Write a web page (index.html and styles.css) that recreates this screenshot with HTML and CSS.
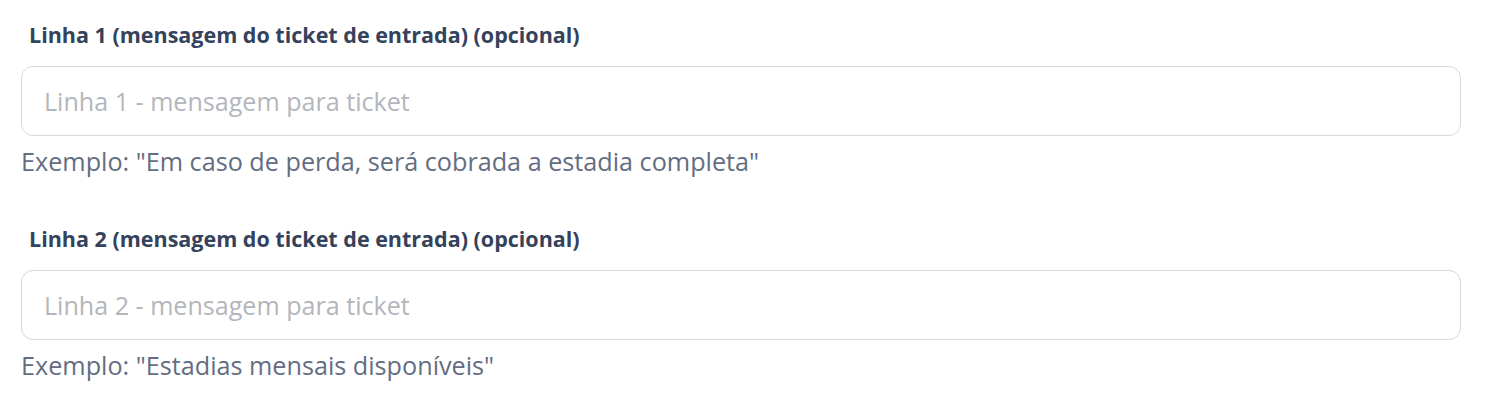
FILE: index.html
```html
<!DOCTYPE html>
<html lang="pt">
<head>
<meta charset="utf-8">
<link rel="stylesheet" href="styles.css">
</head>
<body>
<div class="form">
  <div class="field">
    <label class="label">Linha 1 (mensagem do ticket de entrada) (opcional)</label>
    <input class="input" type="text" placeholder="Linha 1 - mensagem para ticket">
    <p class="help">Exemplo: "Em caso de perda, será cobrada a estadia completa"</p>
  </div>
  <div class="field">
    <label class="label">Linha 2 (mensagem do ticket de entrada) (opcional)</label>
    <input class="input" type="text" placeholder="Linha 2 - mensagem para ticket">
    <p class="help">Exemplo: "Estadias mensais disponíveis"</p>
  </div>
</div>
</body>
</html>
```
FILE: styles.css
```css
html, body {
  margin: 0;
  padding: 0;
  background: #ffffff;
}
body {
  font-family: "Open Sans", "Noto Sans", sans-serif;
}
.form {
  display: flex;
  flex-direction: column;
  gap: 46px;
  padding: 20px 33px 0 21px;
}
.field {
  display: flex;
  flex-direction: column;
}
.label {
  font-size: 21.5px;
  font-weight: 700;
  color: #34425c;
  line-height: 30px;
  padding-left: 8px;
  margin-bottom: 16px;
}
.input {
  box-sizing: border-box;
  height: 70px;
  width: 100%;
  border: 1px solid #d6d8dc;
  border-radius: 12px;
  padding: 0 22px;
  font-family: inherit;
  font-size: 25.1px;
  color: #34425c;
  outline: none;
  background: #fff;
}
.input::placeholder {
  color: #b3b6bc;
  font-weight: 400;
}
.help {
  margin: 8px 0 0 0;
  font-size: 25.2px;
  line-height: 34px;
  color: #636d82;
}
```
